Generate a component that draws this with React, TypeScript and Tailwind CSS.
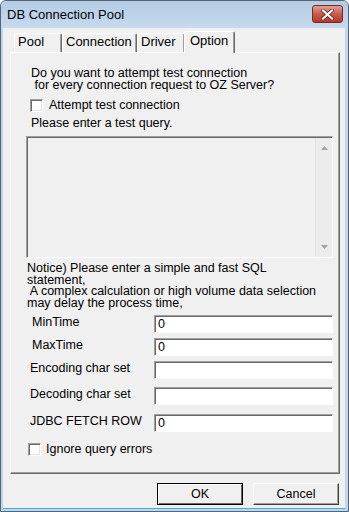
import React from 'react';

const font = { fontFamily: '"Liberation Sans", Arial, sans-serif' };

// classic sunken edit box
const Field: React.FC<{ value?: string }> = ({ value }) => (
  <div className="w-[179px] h-[18px] bg-white border border-t-[#a0a0a0] border-l-[#a0a0a0] border-r-white border-b-white shadow-[inset_1px_1px_0_#696969] flex items-end pl-[3px] pb-[1px] leading-[13px]">
    {value}
  </div>
);

const CheckBox: React.FC = () => (
  <div className="w-[13px] h-[13px] shrink-0 bg-white border border-t-[#a0a0a0] border-l-[#a0a0a0] border-r-white border-b-white shadow-[inset_1px_1px_0_#696969,inset_-1px_-1px_0_#e3e3e3]" />
);

const FieldRow: React.FC<{ label: string; value?: string; mt: string; lw: string; ml: string }> = ({ label, value, mt, lw, ml }) => (
  <div className={`flex items-start ${mt} ${ml}`}>
    <div className={`${lw} shrink-0 pt-[1px] leading-[12px]`}>{label}</div>
    <Field value={value} />
  </div>
);

const tabs = [
  { name: 'Pool', w: 'w-[48px]' },
  { name: 'Connection', w: 'w-[75px]' },
  { name: 'Driver', w: 'w-[48px]' },
];

export default function App() {
  return (
    <div
      className="w-[349px] h-[512px] flex flex-col bg-[#c0d5ea] border border-[#54657a] rounded-t-[6px] overflow-hidden text-[12.5px] text-black"
      style={font}
    >
      {/* title bar */}
      <div className="h-[27px] shrink-0 flex items-start justify-between bg-gradient-to-b from-[#b4cbe4] to-[#c6daef]">
        <div className="ml-[6px] mt-[7px] leading-[14px] text-[13px]">DB Connection Pool</div>
        <div className="mr-[5px] mt-[4px] w-[31px] h-[18px] rounded-[3px] border border-[#7a2a22] bg-gradient-to-b from-[#e0a097] via-[#c65b4c] to-[#b7362a] flex items-center justify-center">
          <svg width="13" height="11" viewBox="0 0 13 11">
            <path d="M2 1.5 L11 9.5 M11 1.5 L2 9.5" stroke="#5a1a14" strokeWidth="3.6" strokeLinecap="square" />
            <path d="M2 1.5 L11 9.5 M11 1.5 L2 9.5" stroke="#ffffff" strokeWidth="2.2" strokeLinecap="square" />
          </svg>
        </div>
      </div>

      {/* client area */}
      <div className="flex-1 flex flex-col bg-[#f0f0f0] ml-[2px] mr-[3px] mb-[2px] border-b border-[#3ab0e0]">
        {/* tab strip */}
        <div className="flex items-end h-[24px] ml-[9px] pl-[2px]">
          {tabs.map((t) => (
            <div
              key={t.name}
              className={`${t.w} h-[19px] border-t border-l border-white border-r border-r-[#696969] shadow-[inset_-1px_0_0_#a0a0a0] rounded-t-[2px] pl-[3px] leading-[16px] text-[13px]`}
            >
              {t.name}
            </div>
          ))}
          <div className="relative -mb-[1px] -ml-[1px] w-[51px] h-[22px] border-t border-l border-white border-r border-r-[#696969] shadow-[inset_-1px_0_0_#a0a0a0] rounded-t-[2px] bg-[#f0f0f0] pl-[5px] leading-[17px] text-[13px] z-10">
            Option
          </div>
        </div>

        {/* tab panel */}
        <div className="ml-[7px] w-[330px] h-[422px] border-t border-l border-white border-r border-b border-r-[#696969] border-b-[#696969] shadow-[inset_-1px_-1px_0_#a0a0a0] flex flex-col">
          <div className="mt-[14px] ml-[20px] leading-[12px] whitespace-pre">
            {'Do you want to attempt test connection\n for every connection request to OZ Server?'}
          </div>
          <div className="mt-[8px] ml-[19px] flex items-center h-[13px]">
            <CheckBox />
            <span className="ml-[6px] leading-[13px]">Attempt test connection</span>
          </div>
          <div className="mt-[5px] ml-[20px] leading-[12px]">Please enter a test query.</div>

          {/* query box */}
          <div className="mt-[7px] ml-[15px] w-[307px] h-[122px] flex border border-t-[#a0a0a0] border-l-[#a0a0a0] border-r-white border-b-white shadow-[inset_1px_1px_0_#696969]">
            <div className="flex-1" />
            <div className="w-[17px] mt-[1px] flex flex-col items-center justify-between py-[8px] bg-[#ececec] border-l border-[#e4e4e4]">
              <svg width="7" height="4" viewBox="0 0 7 4"><path d="M0 4 L3.5 0 L7 4 Z" fill="#a3a3a3" /></svg>
              <svg width="7" height="4" viewBox="0 0 7 4"><path d="M0 0 L7 0 L3.5 4 Z" fill="#a3a3a3" /></svg>
            </div>
          </div>

          <div className="mt-[5px] ml-[16px] leading-[11.7px] whitespace-pre">
            {'Notice) Please enter a simple and fast SQL\nstatement,\n A complex calculation or high volume data selection\nmay delay the process time,'}
          </div>

          <FieldRow label="MinTime" value="0" mt="mt-[5px]" ml="ml-[21px]" lw="w-[122px]" />
          <FieldRow label="MaxTime" value="0" mt="mt-[5px]" ml="ml-[21px]" lw="w-[122px]" />
          <FieldRow label="Encoding char set" mt="mt-[5px]" ml="ml-[19px]" lw="w-[124px]" />
          <FieldRow label="Decoding char set" mt="mt-[8px]" ml="ml-[19px]" lw="w-[124px]" />
          <FieldRow label="JDBC FETCH ROW" value="0" mt="mt-[9px]" ml="ml-[19px]" lw="w-[124px]" />

          <div className="mt-[11px] ml-[17px] flex items-center h-[13px]">
            <CheckBox />
            <span className="ml-[5px] leading-[13px]">Ignore query errors</span>
          </div>
        </div>

        {/* buttons */}
        <div className="mt-[9px] flex justify-end gap-[10px] pr-[6px]">
          <button className="w-[86px] h-[22px] bg-[#f0f0f0] border border-black shadow-[inset_1px_1px_0_#ffffff,inset_-1px_-1px_0_#696969] leading-[18px]">
            OK
          </button>
          <button className="w-[86px] h-[22px] bg-[#f0f0f0] border border-t-white border-l-white border-r-[#404040] border-b-[#404040] shadow-[inset_-1px_-1px_0_#a0a0a0] leading-[18px]">
            Cancel
          </button>
        </div>
      </div>
    </div>
  );
}
